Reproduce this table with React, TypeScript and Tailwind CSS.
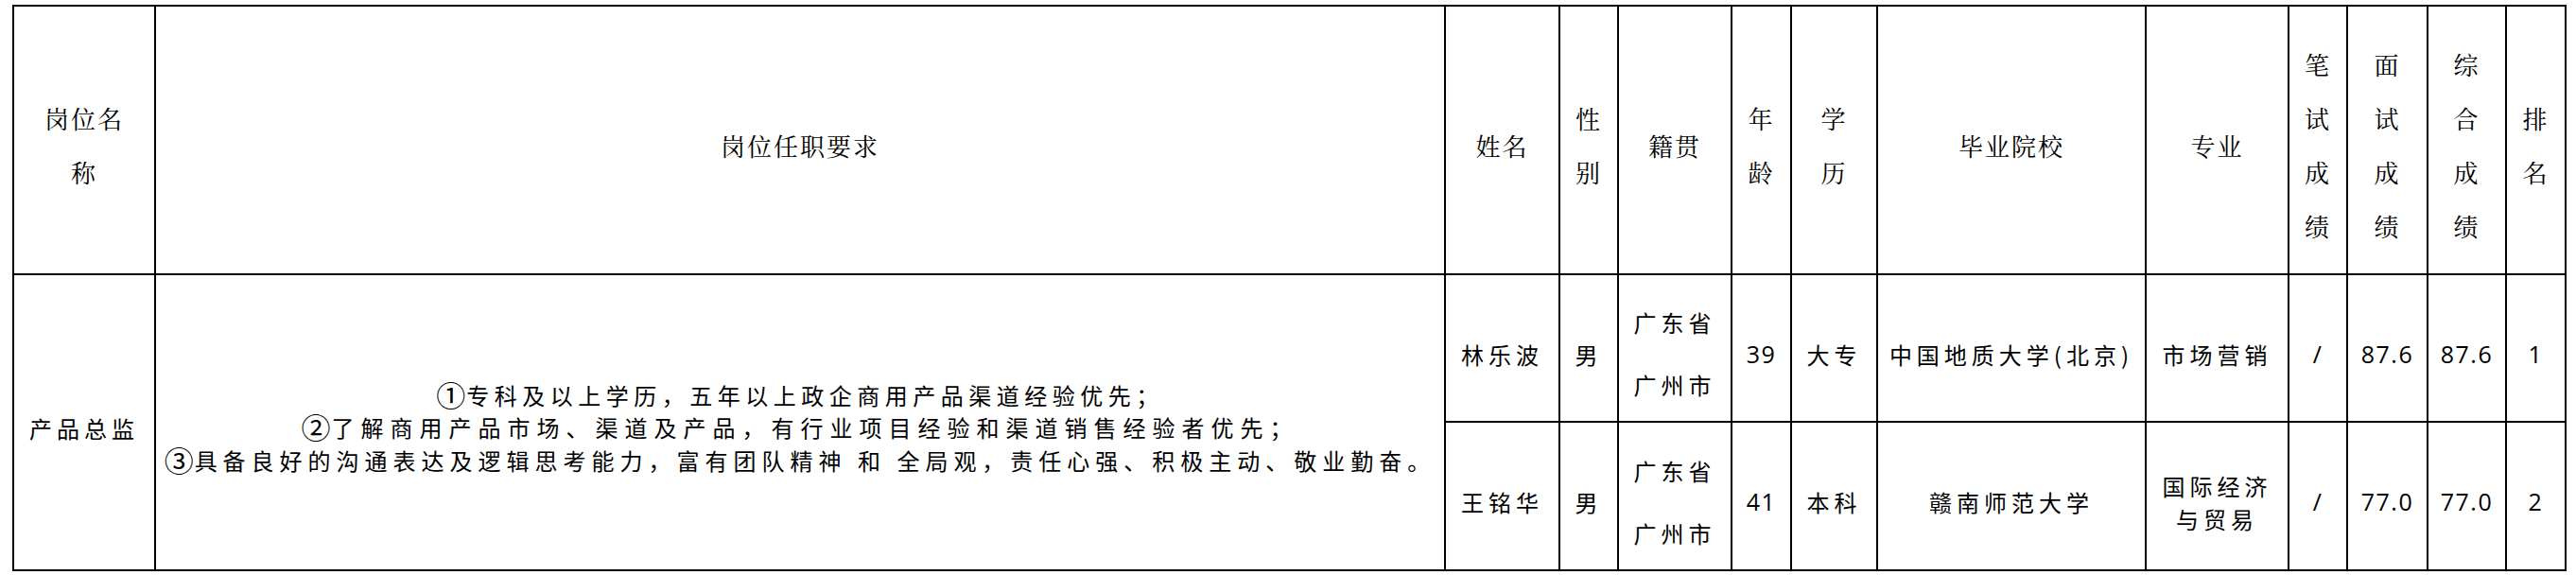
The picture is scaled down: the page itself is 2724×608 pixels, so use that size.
import React from 'react';

const headFont = { fontFamily: '"Noto Serif CJK SC", "Noto Sans CJK SC", serif' };

const headers: string[][] = [
  ['岗位名', '称'],
  ['岗位任职要求'],
  ['姓名'],
  ['性', '别'],
  ['籍贯'],
  ['年', '龄'],
  ['学', '历'],
  ['毕业院校'],
  ['专业'],
  ['笔', '试', '成', '绩'],
  ['面', '试', '成', '绩'],
  ['综', '合', '成', '绩'],
  ['排', '名'],
];

interface Candidate {
  name: string;
  gender: string;
  origin: string[];
  age: string;
  degree: string;
  school: string;
  major: string[];
  written: string;
  interview: string;
  total: string;
  rank: string;
}

const candidates: Candidate[] = [
  {
    name: '林乐波',
    gender: '男',
    origin: ['广东省', '广州市'],
    age: '39',
    degree: '大专',
    school: '中国地质大学(北京)',
    major: ['市场营销'],
    written: '/',
    interview: '87.6',
    total: '87.6',
    rank: '1',
  },
  {
    name: '王铭华',
    gender: '男',
    origin: ['广东省', '广州市'],
    age: '41',
    degree: '本科',
    school: '赣南师范大学',
    major: ['国际经济', '与贸易'],
    written: '/',
    interview: '77.0',
    total: '77.0',
    rank: '2',
  },
];

// circled number, text, letter spacing of that line
const requirements: [string, string, string][] = [
  ['①', '专科及以上学历，五年以上政企商用产品渠道经验优先；', 'tracking-[5.5px]'],
  ['②', '了解商用产品市场、渠道及产品，有行业项目经验和渠道销售经验者优先；', 'tracking-[7px]'],
  ['③', '具备良好的沟通表达及逻辑思考能力，富有团队精神 和 全局观，责任心强、积极主动、敬业勤奋。', 'tracking-[6px]'],
];

function Cell({ children, className = '' }: { children: React.ReactNode; className?: string }) {
  return (
    <div className={`bg-white flex items-center justify-center text-center ${className}`}>
      {children}
    </div>
  );
}

function Body({ lines, leading = 'leading-[35px]' }: { lines: string[]; leading?: string }) {
  return (
    <div className={`pt-[12px] text-[24px] tracking-[5px] ${leading}`}>
      {lines.map((l, i) => (
        <div key={i}>{l}</div>
      ))}
    </div>
  );
}

function Num({ value }: { value: string }) {
  return (
    <div className="pt-[12px] text-[25px] tracking-[1.5px] leading-[35px] font-['Open_Sans']">
      {value}
    </div>
  );
}

export default function App() {
  return (
    <div className="bg-white min-h-screen pt-[5px] pl-[13px] text-black font-['Noto_Sans_CJK_SC',sans-serif]">
      <div className="grid w-max bg-black p-[2px] gap-[2px] grid-cols-[148px_1362px_119px_60px_118px_61px_89px_282px_149px_60px_83px_81px_61px] grid-rows-[282px_154px_155px]">
        {headers.map((lines, i) => (
          <Cell key={i}>
            <div className="pt-[10px] text-[26px] tracking-[2px] leading-[57px]" style={headFont}>
              {lines.map((l, j) => (
                <div key={j}>{l}</div>
              ))}
            </div>
          </Cell>
        ))}

        <Cell className="row-span-2">
          <Body lines={['产品总监']} />
        </Cell>
        <Cell className="row-span-2">
          <div className="pt-[12px] text-[24px] leading-[34.5px]">
            {requirements.map(([n, t, tr]) => (
              <div key={n} className={`h-[34.5px] whitespace-nowrap ${tr}`}>
                <span className="text-[31px] leading-none tracking-[1px] align-[-2px]">{n}</span>
                {t}
              </div>
            ))}
          </div>
        </Cell>

        {candidates.map((c) => (
          <React.Fragment key={c.name}>
            <Cell>
              <Body lines={[c.name]} />
            </Cell>
            <Cell>
              <Body lines={[c.gender]} />
            </Cell>
            <Cell>
              <Body lines={c.origin} leading="leading-[66px]" />
            </Cell>
            <Cell>
              <Num value={c.age} />
            </Cell>
            <Cell>
              <Body lines={[c.degree]} />
            </Cell>
            <Cell>
              <Body lines={[c.school]} />
            </Cell>
            <Cell>
              <Body lines={c.major} />
            </Cell>
            <Cell>
              <Num value={c.written} />
            </Cell>
            <Cell>
              <Num value={c.interview} />
            </Cell>
            <Cell>
              <Num value={c.total} />
            </Cell>
            <Cell>
              <Num value={c.rank} />
            </Cell>
          </React.Fragment>
        ))}
      </div>
    </div>
  );
}
